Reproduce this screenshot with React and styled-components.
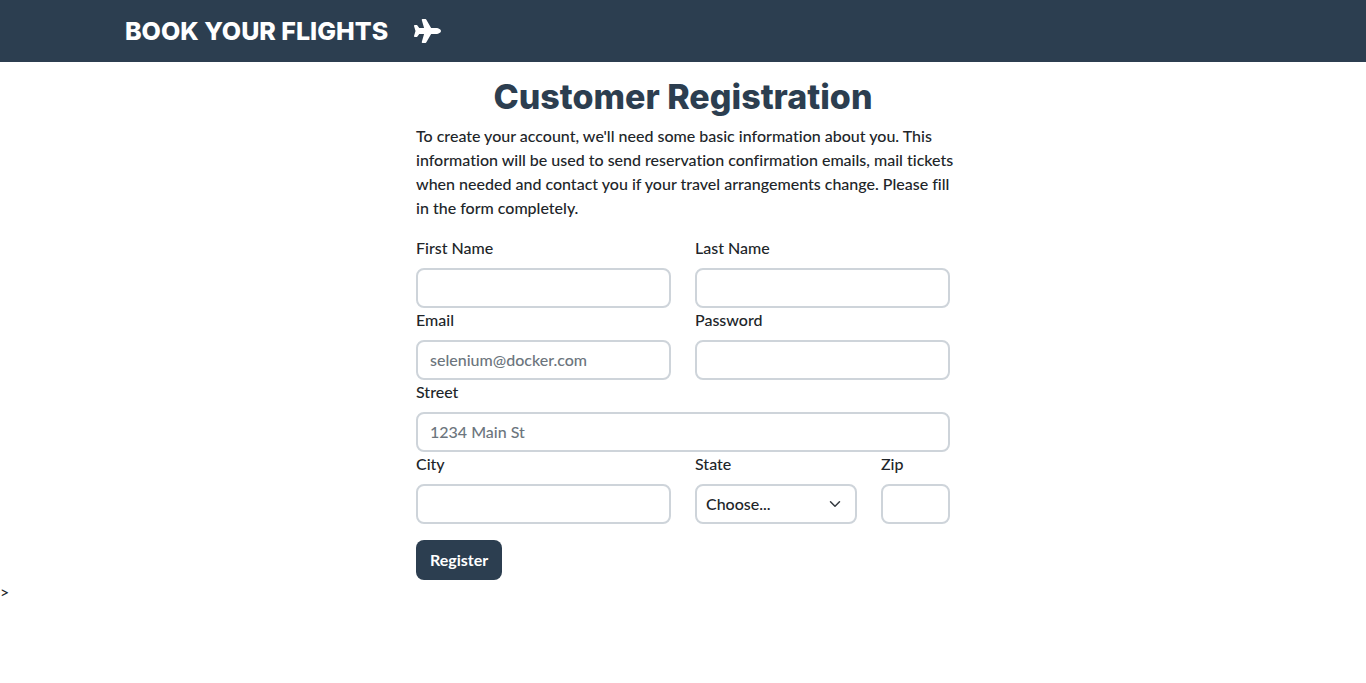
import React from "react";
import styled, { createGlobalStyle } from "styled-components";
import { FaPlane } from "react-icons/fa";

const navy = "#2c3e50";

const GlobalStyle = createGlobalStyle`
  *, *::before, *::after { box-sizing: border-box; }
  body {
    margin: 0;
    background: #fff;
    color: #212529;
    font: 500 16px/24px Lato, "Liberation Sans", sans-serif;
    font-variant-ligatures: no-common-ligatures;
  }
`;

const NavBar = styled.nav`
  padding: 12px;
  background: ${navy};
`;

const NavInner = styled.div`
  display: flex;
  max-width: 1116px;
  margin: 0 auto;
`;

const Brand = styled.a`
  display: flex;
  align-items: center;
  gap: 26px;
  color: #fff;
  font: 800 25px/38px Inter, "Liberation Sans", sans-serif;
  text-transform: uppercase;
  text-decoration: none;
`;

const PlaneIcon = styled(FaPlane)`
  width: 27px;
  height: 24px;
`;

const Main = styled.main`
  max-width: 558px;
  margin: 0 auto;
  padding: 15px 12px 0;
`;

const Title = styled.h1`
  margin: 0 0 7px;
  color: ${navy};
  font: 800 34px/40px Inter, "Liberation Sans", sans-serif;
  text-align: center;
`;

const Intro = styled.p`
  margin: 0 0 16px;

  @media (min-width: 600px) {
    white-space: nowrap;
  }
`;

const FieldGrid = styled.form`
  display: grid;
  grid-template-columns: repeat(6, minmax(0, 1fr));
  column-gap: 24px;
`;

const Field = styled.div`
  grid-column: span ${(p) => p.$span};
`;

const Label = styled.label`
  display: block;
  width: fit-content;
  margin-bottom: 8px;
`;

const Input = styled.input`
  display: block;
  width: 100%;
  height: 40px;
  padding: 5px 12px 7px;
  border: 2px solid #ced4da;
  border-radius: 8px;
  background: #fff;
  color: inherit;
  font: inherit;

  &::placeholder {
    color: #6c757d;
    opacity: 1;
  }
`;

const SelectWrap = styled.div`
  position: relative;
`;

const Select = styled(Input)`
  appearance: none;
  padding: 6px 36px 6px 9px;
`;

const Chevron = styled.svg`
  position: absolute;
  top: 14px;
  right: 16px;
  width: 12px;
  height: 12px;
  pointer-events: none;
`;

const Actions = styled.div`
  grid-column: 1 / -1;
  padding-top: 16px;
`;

const Button = styled.button`
  display: block;
  height: 40px;
  padding: 0 14px;
  border: 0;
  border-radius: 8px;
  background: ${navy};
  color: #fff;
  font: inherit;
  font-weight: 700;
`;

function TextField({ id, label, span, ...rest }) {
  return (
    <Field $span={span}>
      <Label htmlFor={id}>{label}</Label>
      <Input id={id} name={id} {...rest} />
    </Field>
  );
}

export default function App() {
  return (
    <>
      <GlobalStyle />
      <NavBar>
        <NavInner>
          <Brand href="#">
            Book your flights
            <PlaneIcon aria-hidden="true" />
          </Brand>
        </NavInner>
      </NavBar>
      <Main>
        <Title>Customer Registration</Title>
        <Intro>
          To create your account, we'll need some basic information about you. This
          <br />
          information will be used to send reservation confirmation emails, mail tickets
          <br />
          when needed and contact you if your travel arrangements change. Please fill
          <br />
          in the form completely.
        </Intro>
        <FieldGrid onSubmit={(e) => e.preventDefault()}>
          <TextField id="firstName" label="First Name" span={3} type="text" />
          <TextField id="lastName" label="Last Name" span={3} type="text" />
          <TextField id="email" label="Email" span={3} type="email" placeholder="selenium@docker.com" />
          <TextField id="password" label="Password" span={3} type="password" />
          <TextField id="street" label="Street" span={6} type="text" placeholder="1234 Main St" />
          <TextField id="city" label="City" span={3} type="text" />
          <Field $span={2}>
            <Label htmlFor="state">State</Label>
            <SelectWrap>
              <Select as="select" id="state" name="state">
                <option>Choose...</option>
              </Select>
              <Chevron viewBox="0 0 16 16" aria-hidden="true">
                <path
                  d="m2 5 6 6 6-6"
                  fill="none"
                  stroke="#343a40"
                  strokeWidth="2"
                  strokeLinecap="round"
                  strokeLinejoin="round"
                />
              </Chevron>
            </SelectWrap>
          </Field>
          <TextField id="zip" label="Zip" span={1} type="text" />
          <Actions>
            <Button type="submit">Register</Button>
          </Actions>
        </FieldGrid>
      </Main>
      &gt;
    </>
  );
}
